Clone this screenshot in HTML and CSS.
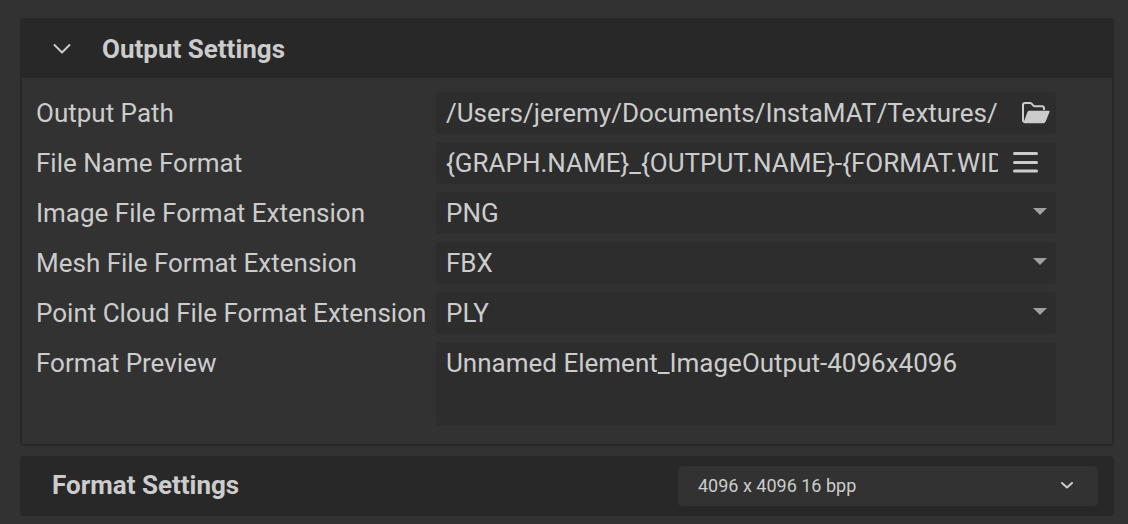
FILE: index.html
```html
<!DOCTYPE html>
<html lang="en">
<head>
<meta charset="utf-8">
<meta name="viewport" content="width=device-width, initial-scale=1">
<title>Output Settings</title>
<link rel="stylesheet" href="styles.css">
</head>
<body>
<main class="page">
  <section class="panel">
    <h2 class="panel-header">
      <button class="toggle" type="button" aria-expanded="true">
        <svg class="chevron" viewBox="0 0 20 12" aria-hidden="true"><path d="M2.500 2l7.500 7.500L17.500 2"/></svg>
        Output Settings
      </button>
    </h2>
    <form class="panel-body">
      <label class="label" for="path">Output Path</label>
      <div class="field">
        <input class="text" id="path" type="text" value="/Users/jeremy/Documents/InstaMAT/Textures/">
        <button class="icon-button folder-button" type="button" aria-label="Browse">
          <svg class="folder" viewBox="0 0 28 22" aria-hidden="true"><path class="folder-back" d="M3 20Q1 20 1 18V3q0-2 2-2h5q1 0 1.600.7l1.700 1.900q.5.6 1.400.6H20q2 0 2 2V8"/><path class="folder-front" d="M7.500 8.700h19q1.500 0 1 1.400l-3.800 9.400q-.7 1.800-2.400 1.800H3q-1.700 0-1.100-1.600L5.400 10.100Q6 8.700 7.500 8.700z"/></svg>
        </button>
      </div>

      <label class="label" for="name">File Name Format</label>
      <div class="field">
        <input class="text" id="name" type="text" value="{GRAPH.NAME}_{OUTPUT.NAME}-{FORMAT.WIDTH}x{FORMAT.HEIGHT}">
        <button class="icon-button menu-button" type="button" aria-label="Insert variable">
          <svg class="menu" viewBox="0 0 26 22" aria-hidden="true"><path d="M1.500 1.500h22M1.500 10.500h22M1.500 19h22"/></svg>
        </button>
      </div>

      <label class="label" for="image">Image File Format Extension</label>
      <div class="field choice">
        <select class="select" id="image"><option>PNG</option></select>
        <svg class="arrow" viewBox="0 0 14 7" aria-hidden="true"><path d="M0 0h14L7 7z"/></svg>
      </div>

      <label class="label" for="mesh">Mesh File Format Extension</label>
      <div class="field choice">
        <select class="select" id="mesh"><option>FBX</option></select>
        <svg class="arrow" viewBox="0 0 14 7" aria-hidden="true"><path d="M0 0h14L7 7z"/></svg>
      </div>

      <label class="label" for="cloud">Point Cloud File Format Extension</label>
      <div class="field choice">
        <select class="select" id="cloud"><option>PLY</option></select>
        <svg class="arrow" viewBox="0 0 14 7" aria-hidden="true"><path d="M0 0h14L7 7z"/></svg>
      </div>

      <label class="label" for="preview">Format Preview</label>
      <textarea class="preview" id="preview" rows="2" readonly>Unnamed Element_ImageOutput-4096x4096</textarea>
    </form>
  </section>

  <section class="format-bar">
    <h2 class="format-title" id="format-title">Format Settings</h2>
    <div class="choice format-choice">
      <select class="format-select" aria-labelledby="format-title"><option>4096 x 4096 16 bpp</option></select>
      <svg class="small-chevron" viewBox="0 0 14 8" aria-hidden="true"><path d="M2 1l5 4.500 5-4.500"/></svg>
    </div>
  </section>
</main>
</body>
</html>
```
FILE: styles.css
```css
* {
  box-sizing: border-box;
}

body {
  margin: 0;
  background: #323232;
  color: #cccccc;
  font-family: Roboto, sans-serif;
  font-size: 26px;
  line-height: 42px;
}

button,
input,
select,
textarea {
  margin: 0;
  padding: 0;
  border: 0;
  background: none;
  color: inherit;
  font: inherit;
}

h2 {
  margin: 0;
  font-size: 26px;
  font-weight: 700;
}

.page {
  display: flex;
  flex-direction: column;
  gap: 10px;
  padding: 18px 14px 8px 20px;
}

.panel {
  border: 2px solid #282828;
  border-top: 0;
  border-radius: 4px;
}

.panel-header {
  background: #282828;
  margin: 0 -2px;
  border-radius: 4px 4px 0 0;
}

.toggle {
  display: flex;
  align-items: center;
  gap: 30px;
  width: 100%;
  height: 60px;
  padding: 2px 32px 0;
  text-align: left;
}

.chevron {
  width: 20px;
  height: 12px;
}

.chevron path,
.small-chevron path {
  fill: none;
  stroke: #cccccc;
  stroke-width: 2;
  stroke-linecap: round;
  stroke-linejoin: round;
}

.panel-body {
  display: grid;
  grid-template-columns: 400px minmax(0, 1fr);
  gap: 8px 0;
  padding: 14px 56px 18px 14px;
}

.label {
  white-space: nowrap;
}

.field {
  display: flex;
  align-items: center;
  height: 42px;
  background: #2d2d2d;
  border-radius: 4px;
}

.text {
  flex: 1;
  min-width: 0;
  height: 42px;
  margin-left: 10px;
}

.icon-button {
  display: flex;
}

.folder-button {
  padding: 0 6px 0 24px;
}

.menu-button {
  padding: 0 17px 0 15px;
}

.folder {
  width: 28px;
  height: 22px;
}

.folder-back {
  fill: none;
  stroke: #cccccc;
  stroke-width: 2;
}

.folder-front {
  fill: #cccccc;
}

.menu {
  width: 26px;
  height: 22px;
}

.menu path {
  stroke: #cccccc;
  stroke-width: 3;
  stroke-linecap: round;
}

.choice {
  display: grid;
  align-items: center;
}

.choice > * {
  grid-area: 1 / 1;
}

.select,
.format-select {
  appearance: none;
  width: 100%;
  height: 100%;
  padding: 0 40px 0 10px;
}

.arrow {
  justify-self: end;
  width: 14px;
  height: 7px;
  margin: 0 9px 3px 0;
  fill: #a0a0a0;
  pointer-events: none;
}

.preview {
  display: block;
  width: 100%;
  height: 84px;
  padding: 0 10px;
  resize: none;
  background: #2d2d2d;
  border-radius: 4px;
}

.format-bar {
  display: flex;
  align-items: center;
  justify-content: space-between;
  height: 60px;
  padding: 0 16px 0 32px;
  background: #282828;
  border-radius: 4px;
}

.format-title {
  padding-bottom: 2px;
}

.format-choice {
  width: 420px;
  height: 40px;
  background: #323232;
  border-radius: 4px;
}

.format-select {
  padding: 0 40px 0 20px;
  font-size: 18px;
  line-height: 38px;
}

.small-chevron {
  justify-self: end;
  width: 14px;
  height: 8px;
  margin-right: 24px;
  pointer-events: none;
}
```
